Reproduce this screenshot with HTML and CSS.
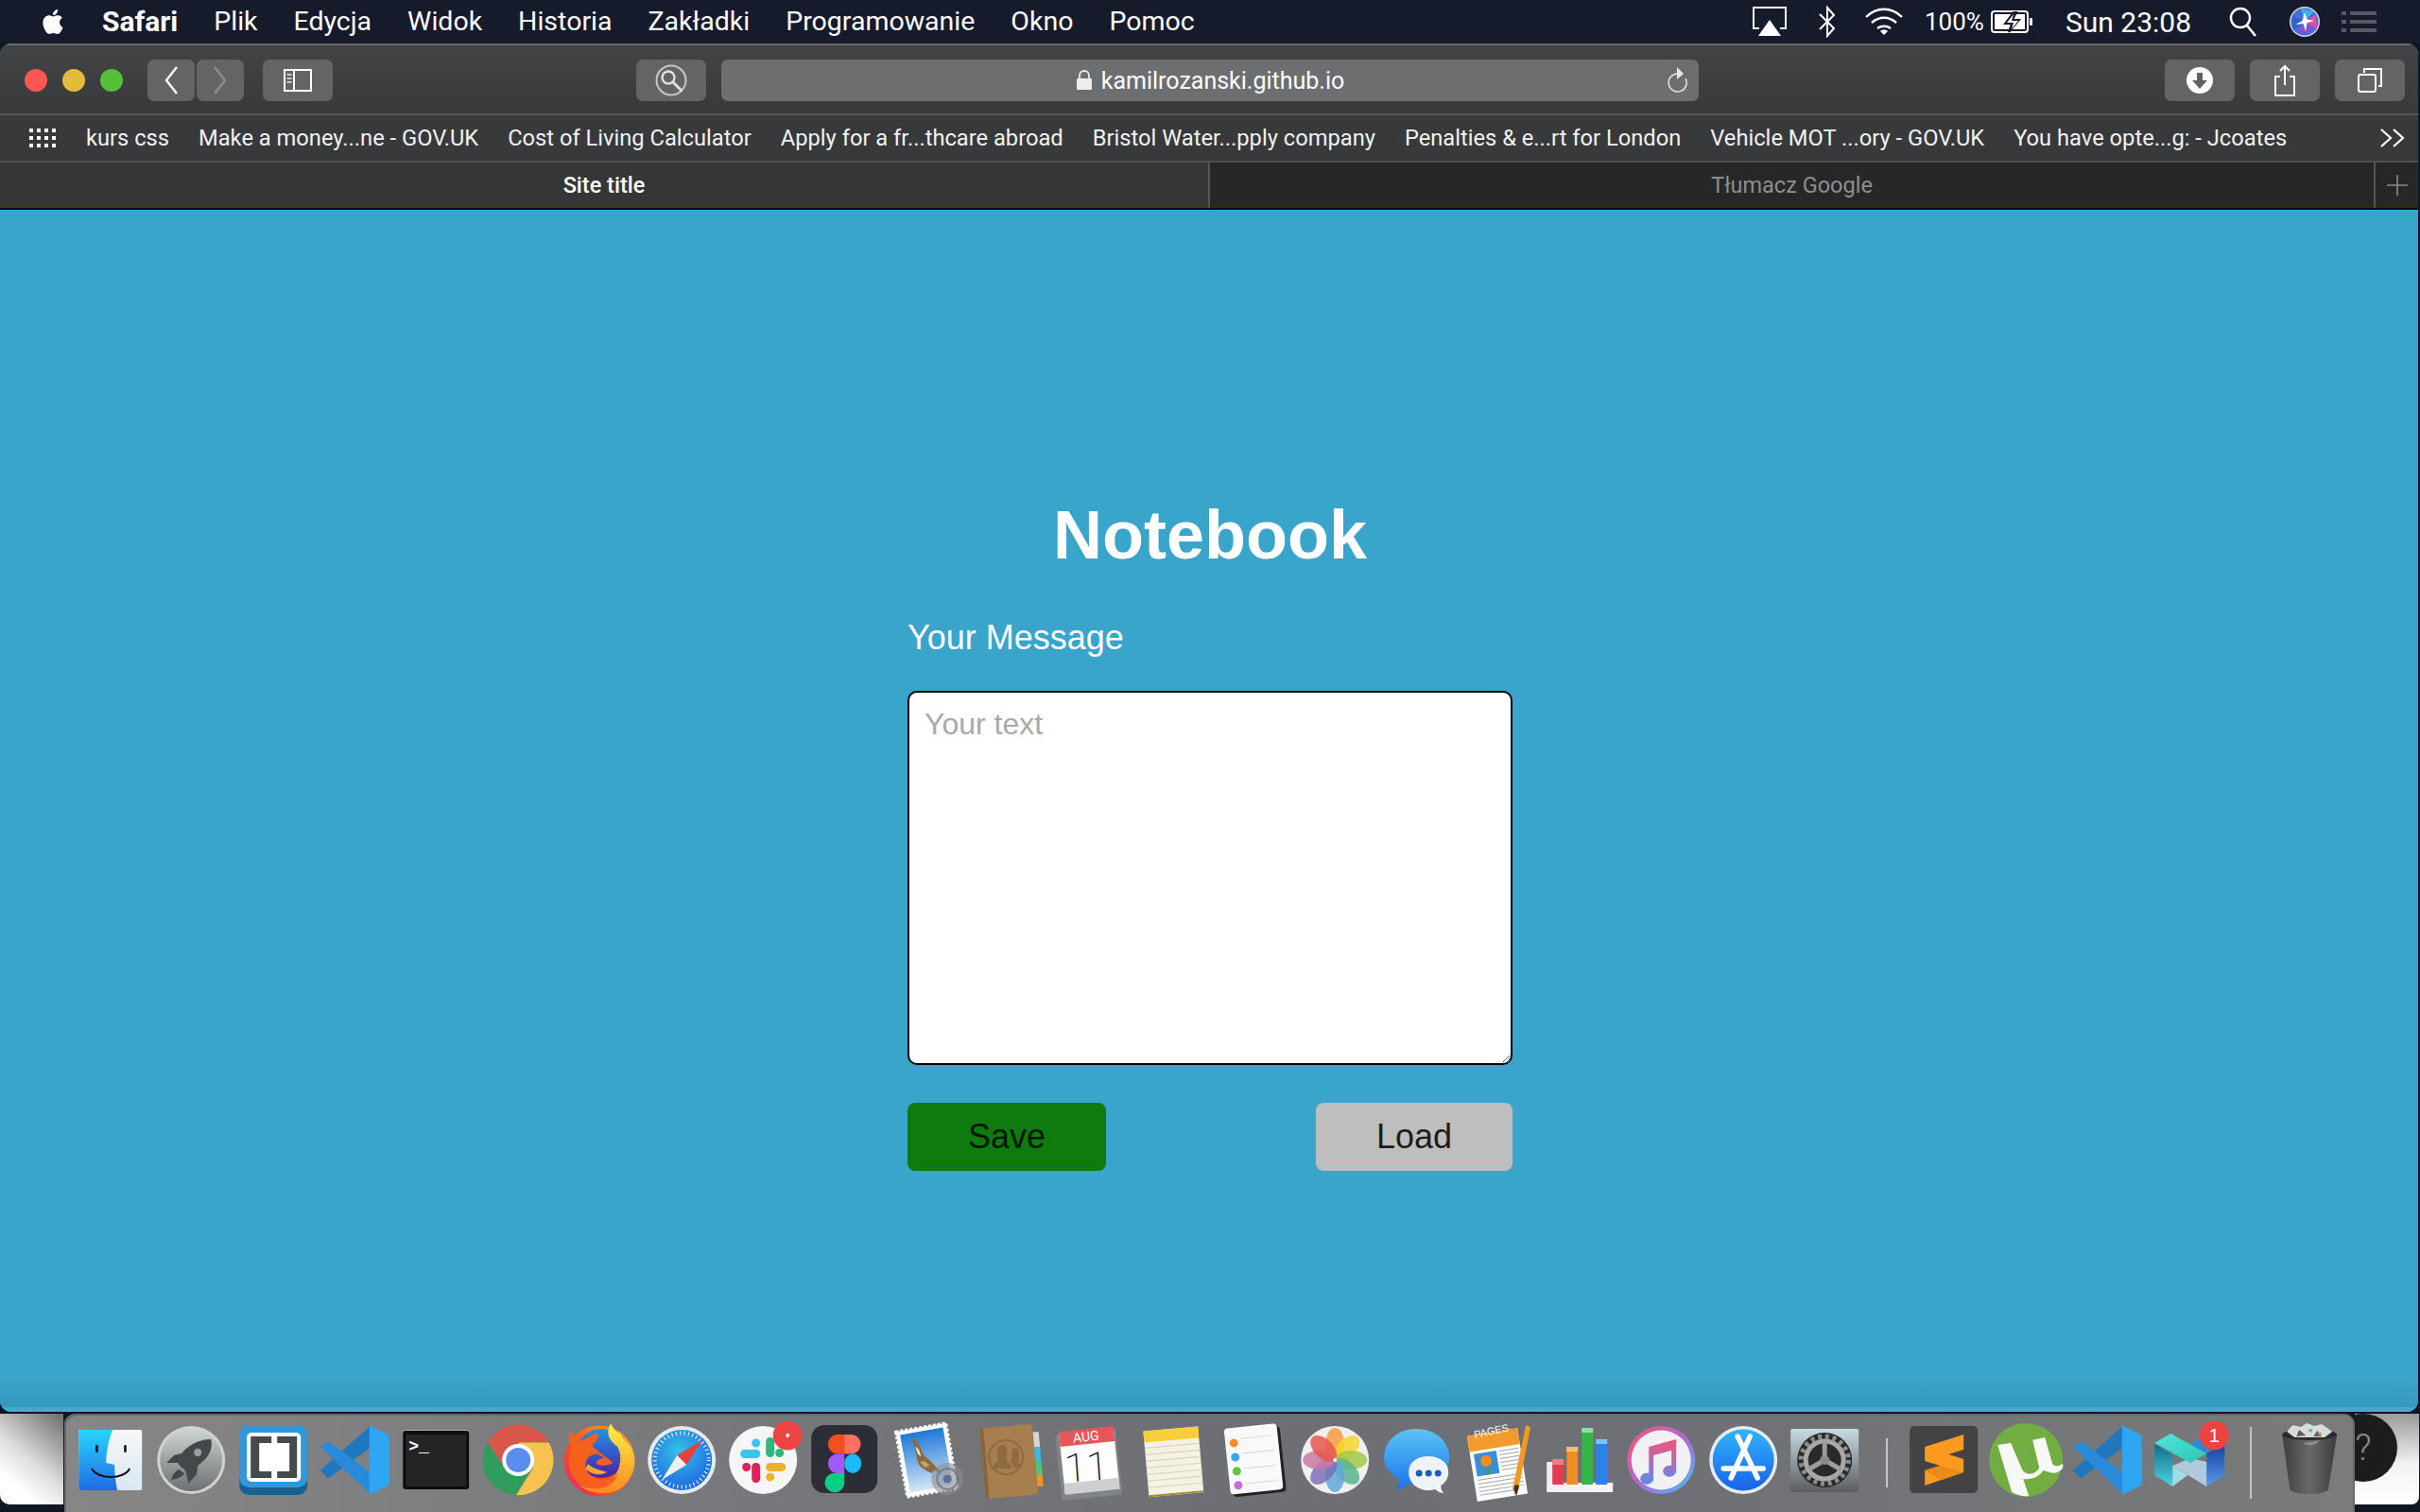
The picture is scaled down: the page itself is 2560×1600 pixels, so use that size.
FILE: index.html
```html
<!DOCTYPE html>
<html lang="pl">
<head>
<meta charset="utf-8">
<title>Site title</title>
<link rel="stylesheet" href="styles.css">
</head>
<body>
<header class="menubar">
  <svg class="apple" viewBox="0 0 24 24"><path fill="#fff" d="M12.152 6.896c-.948 0-2.415-1.078-3.96-1.04-2.04.027-3.91 1.183-4.961 3.014-2.117 3.675-.546 9.103 1.519 12.09 1.013 1.454 2.208 3.09 3.792 3.039 1.52-.065 2.09-.987 3.935-.987 1.831 0 2.35.987 3.96.948 1.637-.026 2.676-1.48 3.676-2.948 1.156-1.688 1.636-3.325 1.662-3.415-.039-.013-3.182-1.221-3.22-4.857-.026-3.04 2.48-4.494 2.597-4.559-1.429-2.09-3.623-2.324-4.39-2.376-2-.156-3.675 1.09-4.61 1.09zM15.53 3.83c.843-1.012 1.4-2.427 1.245-3.83-1.207.052-2.662.805-3.532 1.818-.78.896-1.454 2.338-1.273 3.714 1.338.104 2.715-.688 3.559-1.701"/></svg>
  <nav class="menus">
    <span class="app">Safari</span><span>Plik</span><span>Edycja</span><span>Widok</span><span>Historia</span><span>Zakładki</span><span>Programowanie</span><span>Okno</span><span>Pomoc</span>
  </nav>
  <div class="status">
    <svg class="st-air" viewBox="0 0 36 32"><path d="M7 23H1V1h34v22h-6" fill="none" stroke="#fff" stroke-width="2"/><path d="M18 14l12 17H6z" fill="#fff"/></svg>
    <svg class="st-bt" viewBox="0 0 20 34"><path d="M2 9l15 15-7 8V2l7 8L2 25" fill="none" stroke="#fff" stroke-width="2"/></svg>
    <svg class="st-wifi" viewBox="0 0 42 30"><g fill="none" stroke="#fff" stroke-width="2.4"><path d="M2 10c11-11 27-11 38 0"/><path d="M8 16c8-7 18-7 26 0"/><path d="M14 22c4-3 10-3 14 0"/></g><path d="M21 29l-4-4c2-2 6-2 8 0z" fill="#fff"/></svg>
    <span class="st-pct">100%</span>
    <svg class="st-bat" viewBox="0 0 46 26"><rect x="1" y="2" width="38" height="22" rx="3" fill="none" stroke="#fff" stroke-width="2"/><rect x="4" y="5" width="32" height="16" fill="#fff"/><path d="M24 3l-9 12h7l-3 9 11-13h-7l4-8z" fill="#161b2b" stroke="#161b2b" stroke-width="2"/><path d="M24 5l-7 9h7l-2 7 7-9h-7z" fill="#fff"/><rect x="41" y="9" width="3" height="8" rx="1" fill="#fff"/></svg>
    <span class="st-clock">Sun 23:08</span>
    <svg class="st-search" viewBox="0 0 30 32"><circle cx="12" cy="12" r="10" fill="none" stroke="#fff" stroke-width="2.4"/><path d="M19 20l9 11" stroke="#fff" stroke-width="2.6"/></svg>
    <svg class="st-siri" viewBox="-16 -16 32 32"><circle r="16" fill="#d6d6de"/><circle r="14.500" fill="#3f6fd8"/><path d="M0 0L-4-14 10-11z" fill="#38b0e8"/><path d="M0 0L12-8 13 8z" fill="#e04fa0"/><path d="M0 0L10 11-8 12z" fill="#8a4fd0"/><path d="M0 0L-12 9-13-6z" fill="#2f5fc8"/><path d="M0-10L2.500-2.500 10-1 2.500 1 1 10-1.500 2-10 3-2.500-1z" fill="#fff"/></svg>
    <svg class="st-list" viewBox="0 0 37 24"><g fill="#555a66"><rect y="1" width="5" height="4"/><rect y="10" width="5" height="4"/><rect y="19" width="5" height="4"/><rect x="9" y="1" width="28" height="4"/><rect x="9" y="10" width="28" height="4"/><rect x="9" y="19" width="28" height="4"/></g></svg>
  </div>
</header>

<main class="window">
  <div class="toolbar">
    <div class="lights"><i class="light red"></i><i class="light yellow"></i><i class="light green"></i></div>
    <div class="nav-pair">
      <button class="tbtn half"><svg class="i-chev" viewBox="0 0 16 32"><path d="M14 2L3 16l11 14" fill="none" stroke="#fff" stroke-width="2.4"/></svg></button>
      <button class="tbtn half"><svg class="i-chev" viewBox="0 0 16 32"><path d="M2 2l11 14L2 30" fill="none" stroke="#8b8c8e" stroke-width="2.4"/></svg></button>
    </div>
    <button class="tbtn wide sidebar"><svg class="i-side" viewBox="0 0 30 24"><rect x="1" y="1" width="28" height="22" fill="none" stroke="#fff" stroke-width="2"/><path d="M11 1v22" stroke="#fff" stroke-width="2"/><g fill="#c8c8c8"><rect x="3.5" y="5" width="5" height="2"/><rect x="3.5" y="9" width="5" height="2"/><rect x="3.5" y="13" width="5" height="2"/></g></svg></button>
    <button class="tbtn wide searchbtn"><svg class="i-mag" viewBox="0 0 34 34"><circle cx="17" cy="17" r="15.5" fill="none" stroke="#c8c8c8" stroke-width="2"/><circle cx="14" cy="14" r="6.5" fill="none" stroke="#e0e0e0" stroke-width="2.4"/><path d="M19 19l9 9" stroke="#e0e0e0" stroke-width="3"/></svg></button>
    <div class="address">
      <svg class="i-lock" viewBox="0 0 18 22"><path d="M4 10V6a5 5 0 0 1 10 0v4" fill="none" stroke="#eee" stroke-width="1.8"/><rect x="1" y="9" width="16" height="12" rx="1" fill="#eee"/></svg>
      <span class="url">kamilrozanski.github.io</span>
      <svg class="i-reload" viewBox="0 0 24 30"><path d="M20 14A9.500 9.500 0 1 1 11 9" fill="none" stroke="#e8e8e8" stroke-width="1.5"/><path d="M11 2l7 7-7 6z" fill="#e8e8e8"/></svg>
    </div>
    <div class="tool-right">
      <button class="tbtn wide"><svg class="i-down" viewBox="0 0 28 28"><circle cx="14" cy="14" r="14" fill="#fff"/><path d="M11 6h6v8h5l-8 9-8-9h5z" fill="#5f6062"/></svg></button>
      <button class="tbtn wide"><svg class="i-share" viewBox="0 0 24 34"><path d="M7 13H2v20h20V13h-5" fill="none" stroke="#fff" stroke-width="2"/><path d="M12 22V2M7 7l5-5 5 5" fill="none" stroke="#fff" stroke-width="2"/></svg></button>
      <button class="tbtn wide"><svg class="i-tabs" viewBox="0 0 26 26"><path d="M7 5V1h18v18h-3" fill="none" stroke="#fff" stroke-width="2"/><rect x="1" y="7" width="18" height="18" rx="2" fill="none" stroke="#fff" stroke-width="2"/></svg></button>
    </div>
  </div>

  <div class="bookmarks">
    <svg class="i-grid" viewBox="0 0 29 20"><g fill="#fff"><rect x="0" y="0" width="4" height="4"/><rect x="8" y="0" width="4" height="4"/><rect x="16" y="0" width="4" height="4"/><rect x="24" y="0" width="4" height="4"/><rect x="0" y="8" width="4" height="4"/><rect x="8" y="8" width="4" height="4"/><rect x="16" y="8" width="4" height="4"/><rect x="24" y="8" width="4" height="4"/><rect x="0" y="16" width="4" height="4"/><rect x="8" y="16" width="4" height="4"/><rect x="16" y="16" width="4" height="4"/><rect x="24" y="16" width="4" height="4"/></g></svg>
    <span>kurs css</span><span>Make a money...ne - GOV.UK</span><span>Cost of Living Calculator</span><span>Apply for a fr...thcare abroad</span><span>Bristol Water...pply company</span><span>Penalties &amp; e...rt for London</span><span>Vehicle MOT ...ory - GOV.UK</span><span>You have opte...g: - Jcoates</span>
    <svg class="i-more" viewBox="0 0 28 22"><path d="M2 2l10 9-10 9M15 2l10 9-10 9" fill="none" stroke="#fff" stroke-width="2.2"/></svg>
  </div>

  <div class="tabs">
    <div class="tab active">Site title</div>
    <div class="tab inactive">Tłumacz Google</div>
    <div class="tab plus"><svg class="i-plus" viewBox="0 0 22 22"><path d="M11 0v22M0 11h22" stroke="#8a8a8a" stroke-width="1.6"/></svg></div>
  </div>

  <section class="content">
    <div class="notebook">
      <h1>Notebook</h1>
      <label class="msg-label" for="msg">Your Message</label>
      <textarea id="msg" class="msg" placeholder="Your text"></textarea>
      <div class="actions">
        <button class="act save">Save</button>
        <button class="act load">Load</button>
      </div>
    </div>
  </section>
</main>

<footer class="dockrow">
  <div class="wall-left"></div>
  <div class="dock">
    <!-- Finder -->
    <svg class="ico" viewBox="-43 -44 86 88"><defs><linearGradient id="fa" x1="0" y1="0" x2="0" y2="1"><stop offset="0" stop-color="#2ad4fd"/><stop offset="1" stop-color="#1e6ce6"/></linearGradient><linearGradient id="fb" x1="0" y1="0" x2="0" y2="1"><stop offset="0" stop-color="#f6f7f8"/><stop offset="1" stop-color="#d9e8f3"/></linearGradient></defs><rect x="-33" y="-32" width="67" height="64" rx="2" fill="url(#fb)"/><path d="M-31-32H3C-1-22-4-9-4 3L5 5c0 9 1 19 3 27H-31a2 2 0 0 1-2-2V-30a2 2 0 0 1 2-2z" fill="url(#fa)"/><rect x="-15" y="-16" width="2.600" height="8" rx="1.300" fill="#111"/><rect x="15" y="-16" width="2.600" height="8" rx="1.300" fill="#111"/><path d="M-19 9c6 12 34 12 40 0" fill="none" stroke="#111" stroke-width="2"/></svg>
    <!-- Launchpad -->
    <svg class="ico" viewBox="-43 -44 86 88"><defs><linearGradient id="la" x1="0" y1="0" x2="0" y2="1"><stop offset="0" stop-color="#ced4d4"/><stop offset="1" stop-color="#6d7072"/></linearGradient></defs><circle r="36" fill="#d0d2d2"/><circle r="33" fill="url(#la)"/><path d="M21-22C8-22-4-15-10-7L-18-5-26 3-14 3C-13 6-10 8-8 9-7 11-5 13-5 15L-3 25 6 15 7 6C16 0 24-10 21-22z" fill="#45484a"/><circle cx="7" cy="-8" r="4" fill="#9a9d9e"/><path d="M-13 10C-18 12-20 17-21 21-15 20-9 18-7 14z" fill="#45484a"/></svg>
    <!-- Brackets -->
    <svg class="ico" viewBox="-43 -44 86 88"><rect x="-36" y="-26" width="72" height="63" rx="10" fill="#18608f"/><rect x="-36" y="-37" width="72" height="66" rx="10" fill="#3298d8"/><rect x="-28" y="-29" width="57" height="52" rx="5" fill="#fff"/><path d="M-2-25h-22v44H-2v-7h-13v-30H-2z" fill="#464a4c"/><path d="M4-25H25v44H4v-7H17v-30H4z" fill="#464a4c"/></svg>
    <!-- VS Code -->
    <svg class="ico" viewBox="-43 -44 86 88"><use href="#vsc"/></svg>
    <!-- Terminal -->
    <svg class="ico" viewBox="-43 -44 86 88"><rect x="-35" y="-32" width="70" height="63" rx="3" fill="#a9abad"/><rect x="-35" y="-31" width="70" height="62" rx="3" fill="#0d0d0d"/><rect x="-32" y="-27" width="64" height="55" fill="#242424"/><text class="term" x="-29" y="-9">&gt;_</text></svg>
    <!-- Chrome -->
    <svg class="ico" viewBox="-43 -44 86 88"><path d="M32.300-18.500A37 37 0 0 0-32.300-18.500L-16 6 0-18.500z" fill="#d9564a"/><path d="M-32.300-18.500A37 37 0 0 0-2 37L10 14-16 6z" fill="#2f9e5c"/><path d="M-2 37A37 37 0 0 0 32.300-18.500H0L16 8z" fill="#f6c34e"/><circle r="17" fill="#fff"/><circle r="13" fill="#5b8dee"/></svg>
    <!-- Firefox -->
    <svg class="ico" viewBox="-43 -44 86 88"><defs><linearGradient id="ffa" x1="0" y1="1" x2="1" y2="0"><stop offset="0" stop-color="#e9206a"/><stop offset=".45" stop-color="#f9551f"/><stop offset="1" stop-color="#ffb020"/></linearGradient><linearGradient id="ffb" x1="0" y1="0" x2="0" y2="1"><stop offset="0" stop-color="#fff04a"/><stop offset="1" stop-color="#f98a1f"/></linearGradient><linearGradient id="ffc" x1="0" y1="0" x2="0" y2="1"><stop offset="0" stop-color="#1f90e8"/><stop offset="1" stop-color="#4a22a0"/></linearGradient></defs><circle cx="0" cy="1" r="37.500" fill="url(#ffa)"/><circle cx="2" cy="-7" r="26" fill="url(#ffc)"/><path d="M12-39C5-26 12-20 19-14 25-4 22 12 12 22 2 31-12 32-22 26-12 36 12 40 26 27 38 15 40-2 33-14 29-20 24-21 22-29 20-27 14-33 12-39z" fill="url(#ffb)"/><path d="M-31-31C-33-24-33-19-29-14-36 2-32 18-20 26-6 34 14 32 20 14 12 26-8 22-14 10-16 4-14-4-6-6-3-7 4-4 4-2-1-1-5 2-3 4 1 7 10 6 14 3 10-2 4-4-8-15-3-20 3-29-4-28-15-24-21-17-24-21-28-25-31-31z" fill="#f5601e"/><path d="M-15 9C-10 14-2 18 8 13 0 10-8 9-12 4z" fill="#ffa53a"/></svg>
    <!-- Safari -->
    <svg class="ico" viewBox="-43 -44 86 88"><defs><radialGradient id="sa" cx=".45" cy=".35" r=".7"><stop offset="0" stop-color="#36c0ea"/><stop offset="1" stop-color="#1b62de"/></radialGradient></defs><circle r="36" fill="#e6ebef"/><circle r="32" fill="url(#sa)"/><circle r="28.500" fill="none" stroke="#d8ecff" stroke-width="4" stroke-dasharray="1.200 3.200"/><path d="M22-21L5 5-5-5z" fill="#e8403a"/><path d="M-21 21L5 5-5-5z" fill="#f0f0f0"/></svg>
    <!-- Slack -->
    <svg class="ico" viewBox="-43 -44 86 88"><circle r="36" fill="#f6f6f6"/><g fill="#37c5f0"><rect x="-24" y="-11" width="21" height="9" rx="4.5"/><circle cx="-7.5" cy="-18" r="4.5"/></g><g fill="#2eb67d"><rect x="3" y="-24" width="9" height="21" rx="4.5"/><circle cx="17.500" cy="-7.500" r="4.500"/></g><g fill="#ecb22e"><rect x="3" y="3" width="21" height="9" rx="4.5"/><circle cx="7.5" cy="18" r="4.5"/></g><g fill="#e01e5a"><rect x="-12" y="3" width="9" height="21" rx="4.5"/><circle cx="-17.500" cy="7.500" r="4.500"/></g><circle cx="26" cy="-26" r="15.500" fill="#ef4444"/><circle cx="26" cy="-26" r="2" fill="#fff"/></svg>
    <!-- Figma -->
    <svg class="ico" viewBox="-43 -44 86 88"><rect x="-35" y="-37" width="70" height="72" rx="14" fill="#2c2e35"/><path d="M0-27h-8a10.300 10.300 0 0 0 0 20.500H0z" fill="#f24e1e"/><path d="M0-27H8a10.300 10.300 0 0 1 0 20.500H0z" fill="#ff7262"/><path d="M0-6.500H-8a10.300 10.300 0 0 0 0 20.500H0z" fill="#a259ff"/><ellipse cx="9" cy="3.750" rx="9" ry="10.250" fill="#1abcfe"/><path d="M0 14H-8A10.300 10.300 0 1 0 0 24.300z" fill="#0acf83"/></svg>
    <!-- Mail -->
    <svg class="ico" viewBox="-43 -44 86 88"><defs><linearGradient id="ma" x1="0" y1="0" x2="0" y2="1"><stop offset="0" stop-color="#1f78d8"/><stop offset="1" stop-color="#d4e6f4"/></linearGradient></defs><g transform="rotate(-10)"><rect x="-27" y="-35" width="54" height="70" fill="#fff" stroke="#fff" stroke-width="3" stroke-dasharray="3 2"/><rect x="-23" y="-31" width="46" height="62" fill="url(#ma)"/></g><path d="M-16-25C-11-21-8-17-6-12-4-6-1-3 3 0L12 9 16 14 8 11 5 14C0 11-5 9-8 5-10 0-11-4-12-10-13-15-15-20-16-25z" fill="#8a6b40"/><path d="M-12-14C-9-13-7-9-6-4L-9-6z" fill="#f0e8d8"/><path d="M-7 2C-3 0 0 2 3 6L-2 8z" fill="#c8a468"/><circle cx="22" cy="20" r="17" fill="#8c8e94" opacity=".6"/><circle cx="22" cy="20" r="11" fill="none" stroke="#6a6c74" stroke-width="2" opacity=".7"/><circle cx="22" cy="20" r="4.500" fill="#5c7298"/></svg>
    <!-- Contacts -->
    <svg class="ico" viewBox="-43 -44 86 88"><g transform="rotate(-5)"><rect x="26" y="-27" width="9" height="16" fill="#d3d5d6"/><rect x="26" y="-11" width="9" height="15" fill="#3ab8e4"/><rect x="26" y="4" width="9" height="14" fill="#4ac87a"/><rect x="26" y="18" width="9" height="13" fill="#e89a22"/><rect x="-27" y="-36" width="56" height="75" rx="4" fill="#a77e4e"/><rect x="-27" y="-36" width="4" height="75" rx="2" fill="#8a643a"/></g><circle cx="-2" cy="-3" r="18" fill="none" stroke="#8e6a40" stroke-width="2"/><path d="M-10-14a6 8 0 0 1 8 0c2 8 1 12 0 15 4 2 6 5 6 8H-16c0-3 2-6 6-8-2-4-2-9 0-15z" fill="#8e6a40"/><path d="M5-11a5 7 0 0 1 6 0c2 7 0 11-1 13 3 1 5 4 5 6H7c-1-3-3-5-4-6 2-4 1-8 2-13z" fill="#8e6a40"/></svg>
    <!-- Calendar -->
    <svg class="ico" viewBox="-43 -44 86 88"><g transform="rotate(-6)"><rect x="-33" y="-30" width="64" height="70" rx="2" fill="#7f8488"/><rect x="-29" y="-31" width="58" height="64" fill="#fff"/><rect x="-29" y="22" width="58" height="12" fill="#cfcfcf"/><rect x="-29" y="-33" width="58" height="16" fill="#e9565a"/></g><text class="cal-m" x="-3" y="-20" transform="rotate(-6 -3 -20)">AUG</text><text class="cal-d" x="-2" y="22" transform="rotate(-4 -2 22)">11</text></svg>
    <!-- Notes -->
    <svg class="ico" viewBox="-43 -44 86 88"><g transform="rotate(-5)"><rect x="-27" y="-33" width="58" height="70" fill="#f5f2e2"/><rect x="-27" y="-33" width="58" height="12" fill="#f8cf3a"/><g stroke="#d8d4c2" stroke-width="1.200"><path d="M-27-15H31M-27-8H31M-27-1H31M-27 6H31M-27 13H31M-27 20H31M-27 27H31"/></g><rect x="-27" y="35" width="58" height="2" fill="#a88a3a"/></g></svg>
    <!-- Reminders -->
    <svg class="ico" viewBox="-43 -44 86 88"><g transform="rotate(-6)"><rect x="-24" y="-33" width="56" height="70" rx="4" fill="#222"/><rect x="-27" y="-36" width="56" height="70" rx="4" fill="#f9f9f9"/><g stroke="#d6d6d6" stroke-width="1"><path d="M-10-24H24M-10-8H24M-10 8H24M-10 24H24"/></g><circle cx="-18" cy="-20" r="4.500" fill="#f59220"/><circle cx="-18" cy="-5" r="4.500" fill="#35a6ef"/><circle cx="-18" cy="10" r="4.500" fill="#5ec83c"/><circle cx="-18" cy="25" r="4.500" fill="#c26fd8"/></g></svg>
    <!-- Photos -->
    <svg class="ico" viewBox="-43 -44 86 88"><circle r="36" fill="#f0f0f0"/><g><ellipse cy="-17" rx="10" ry="17" fill="#f7a04a" opacity=".9"/><ellipse cy="-17" rx="10" ry="17" fill="#f6d72f" opacity=".85" transform="rotate(45)"/><ellipse cy="-17" rx="10" ry="17" fill="#a2c946" opacity=".85" transform="rotate(90)"/><ellipse cy="-17" rx="10" ry="17" fill="#58b68e" opacity=".85" transform="rotate(135)"/><ellipse cy="-17" rx="10" ry="17" fill="#60a6dc" opacity=".85" transform="rotate(180)"/><ellipse cy="-17" rx="10" ry="17" fill="#7a72b8" opacity=".85" transform="rotate(225)"/><ellipse cy="-17" rx="10" ry="17" fill="#c77aa4" opacity=".85" transform="rotate(270)"/><ellipse cy="-17" rx="10" ry="17" fill="#e8574c" opacity=".85" transform="rotate(315)"/></g><circle r="2" fill="#fff"/></svg>
    <!-- Messages -->
    <svg class="ico" viewBox="-43 -44 86 88"><defs><linearGradient id="bubble" x1="0" y1="0" x2="0" y2="1"><stop offset="0" stop-color="#5cc4f8"/><stop offset="1" stop-color="#1a74e8"/></linearGradient></defs><path d="M0-33c20 0 35 13 35 31 0 17-15 29-33 29-4 0-8-1-11-2-3 3-8 6-13 6 2-3 4-7 4-11-9-5-16-13-16-22C-34-20-20-33 0-33z" fill="url(#bubble)"/><path d="M13-4c12 0 21 7 21 17 0 6-3 11-8 14 0 3 1 6 3 8-4 0-7-2-9-4-2 .500-5 1-7 1-12 0-21-8-21-19S1-4 13-4z" fill="#eef3f8"/><circle cx="3" cy="14" r="3.500" fill="#1d5fb8"/><circle cx="13" cy="14" r="3.500" fill="#1d5fb8"/><circle cx="23" cy="14" r="3.500" fill="#1d5fb8"/></svg>
    <!-- Pages -->
    <svg class="ico" viewBox="-43 -44 86 88"><g transform="rotate(-9)"><rect x="-28" y="-30" width="54" height="70" fill="#fbfbfb"/><rect x="-28" y="-30" width="54" height="17" fill="#f29a2e"/><rect x="-24" y="-10" width="24" height="24" fill="#3b8fd0"/><circle cx="-12" cy="-1" r="6" fill="#f28c1e"/><path d="M-12 5v9" stroke="#4a9c3a" stroke-width="2"/><g stroke="#a8a8a8" stroke-width="1"><path d="M3-9H24M3-5H24M3-1H24M3 3H24M3 7H24M3 11H24M-24 18H24M-24 22H24M-24 26H24M-24 30H24M-24 34H14"/></g></g><text class="pg" x="-24" y="-23" transform="rotate(-12 -24 -23)">PAGES</text><path d="M30-37l5 2-13 66-3 7-3-8z" fill="#f09a22"/><path d="M19 26l4 1-3 11-3-8z" fill="#333"/></svg>
    <!-- Numbers -->
    <svg class="ico" viewBox="-43 -44 86 88"><rect x="-35" y="24" width="70" height="10" fill="#f4f4f4"/><rect x="-35" y="2" width="9" height="22" fill="#eee"/><rect x="-29" y="0" width="12" height="26" fill="#e63a50"/><rect x="-29" y="-1" width="12" height="6" fill="#f07c88"/><rect x="-14" y="-14" width="12" height="40" fill="#f28c22"/><rect x="-14" y="-14" width="12" height="5" fill="#fbc06e"/><rect x="2" y="-34" width="12" height="60" fill="#34b648"/><rect x="2" y="-34" width="12" height="5" fill="#8fe0a0"/><rect x="17" y="-22" width="12" height="48" fill="#2a84e8"/><rect x="17" y="-22" width="12" height="5" fill="#7ac4f2"/></svg>
    <!-- iTunes -->
    <svg class="ico" viewBox="-43 -44 86 88"><defs><linearGradient id="ita" x1="0" y1="0" x2="1" y2="1"><stop offset="0" stop-color="#f45a6a"/><stop offset=".5" stop-color="#b464d8"/><stop offset="1" stop-color="#3cc4f0"/></linearGradient><linearGradient id="itb" x1="0" y1="0" x2="0" y2="1"><stop offset="0" stop-color="#f9527a"/><stop offset="1" stop-color="#5a8cf0"/></linearGradient></defs><circle r="36" fill="url(#ita)"/><circle r="31.500" fill="#f1f1f4"/><path d="M-13-14L16-22V12a7 6 0 1 1-5-6V-10L-8-5V20a7 6 0 1 1-5-6z" fill="url(#itb)"/></svg>
    <!-- App Store -->
    <svg class="ico" viewBox="-43 -44 86 88"><defs><linearGradient id="asa" x1="0" y1="0" x2="0" y2="1"><stop offset="0" stop-color="#2fb4fa"/><stop offset="1" stop-color="#1a62ea"/></linearGradient></defs><circle r="36" fill="#e9ecef"/><circle r="32.500" fill="url(#asa)"/><g stroke="#fff" stroke-width="5.500" stroke-linecap="round" fill="none"><path d="M-6-25L15 19"/><path d="M7-25L-13 19"/><path d="M-21 9H21"/></g></svg>
    <!-- System Preferences -->
    <svg class="ico" viewBox="-43 -44 86 88"><defs><linearGradient id="pra" x1="0" y1="0" x2="0" y2="1"><stop offset="0" stop-color="#c8dbe2"/><stop offset="1" stop-color="#5b5d5f"/></linearGradient></defs><rect x="-36" y="-33" width="72" height="67" rx="2" fill="url(#pra)"/><circle r="29" fill="#2a2a2c"/><circle r="25" fill="none" stroke="#8e8e8e" stroke-width="5" stroke-dasharray="4 3.850"/><circle r="20" fill="none" stroke="#a8a8a8" stroke-width="5"/><g stroke="#9c9c9c" stroke-width="5"><path d="M0 0V-20M0 0L17 10M0 0L-17 10"/></g><circle r="5" fill="#8a8a8a"/></svg>
    <i class="dock-sep first"></i>
    <!-- Sublime -->
    <svg class="ico" viewBox="-43 -44 86 88"><rect x="-36" y="-36" width="72" height="71" rx="5" fill="#434343"/><path d="M21-27V-11L5-6 21-1V13L-20 27V11L-4 6-20 1V-14z" fill="#fa9a20"/><path d="M-4 6L21 13-2 21-20 11z" fill="#e98a1a"/></svg>
    <!-- uTorrent -->
    <svg class="ico" viewBox="-43 -44 86 88"><ellipse rx="39" ry="39" fill="#72ad42"/><path d="M-30-16L-16-18-4 10C0 17 10 16 14 8L7-21 20-24 28 4C31 8 36 6 39 4V8C36 13 30 15 25 13L18 11C14 18 6 21-3 20L3 38C-2 39-10 37-15 34z" fill="#f8f8f4"/></svg>
    <!-- VS Code 2 -->
    <svg class="ico" viewBox="-43 -44 86 88"><defs><g id="vsc"><path d="M17-36V-14L-28 19-36 11z" fill="#1f77be" stroke="#1f77be" stroke-width="1" stroke-linejoin="round"/><path d="M-36-14L-27-19 17 14V36z" fill="#288ad9" stroke="#288ad9" stroke-width="1" stroke-linejoin="round"/><path d="M16-36L36-26V26L16 36z" fill="#2fa6f4" stroke="#2fa6f4" stroke-width="1" stroke-linejoin="round"/></g></defs><use href="#vsc"/></svg>
    <!-- Nimbus -->
    <svg class="ico" viewBox="-43 -44 86 88"><defs><linearGradient id="na" x1="0" y1="0" x2="0" y2="1"><stop offset="0" stop-color="#0f6f8c"/><stop offset="1" stop-color="#4ad4e0"/></linearGradient><linearGradient id="nb" x1="0" y1="0" x2="0" y2="1"><stop offset="0" stop-color="#103d9c"/><stop offset="1" stop-color="#5a9ae8"/></linearGradient><linearGradient id="nc" x1="0" y1="0" x2="1" y2="1"><stop offset="0" stop-color="#50e8dc"/><stop offset="1" stop-color="#2cc4b4"/></linearGradient></defs><path d="M1-17L9-22 22-12 18-7z" fill="#2a8ad8"/><path d="M-37-17L-18-6V28L-37 16z" fill="url(#na)"/><path d="M18-7L37-19V16L18 28z" fill="url(#nb)"/><path d="M-18 6L1-2 18 2V28z" fill="#b0c8dc"/><path d="M-18 6L-2 16-18 28z" fill="#a4dbe0"/><path d="M-37-18L-20-28 18-7 1 3z" fill="url(#nc)"/><circle cx="26" cy="-26" r="15.500" fill="#ec4242"/><text class="nb" x="26" y="-19">1</text></svg>
    <i class="dock-sep last"></i>
    <!-- Trash -->
    <svg class="ico" viewBox="-43 -44 86 88"><defs><linearGradient id="tra" x1="0" y1="0" x2="1" y2="0"><stop offset="0" stop-color="#3c3e40"/><stop offset=".5" stop-color="#66686a"/><stop offset="1" stop-color="#3a3c3e"/></linearGradient></defs><path d="M-28-27L-20 30C-19 38 20 38 21 30L30-27z" fill="url(#tra)"/><ellipse cx="1" cy="-27" rx="29" ry="6" fill="#2a2b2c"/><path d="M-23-30L-17-37-8-35-2-39 6-36 14-38 25-30 17-24H-15z" fill="#d8dadc"/><path d="M-10-32L-3-26-13-25zM9-31L14-25H5z" fill="#5a5e62"/><path d="M-1-32L4-33 3-29z" fill="#4ab878"/><path d="M8-28L13-29 13-25z" fill="#d8702a"/><path d="M-6-18C0-19 8-20 12-21 8-15 0-14-6-18z" fill="#8a8c8e"/></svg>
  </div>
  <div class="wall-right"><div class="helpcircle">?</div></div>
</footer>
</body>
</html>
```

FILE: styles.css
```css
* { box-sizing: border-box; }
html, body { margin: 0; padding: 0; }
body {
  width: 2560px;
  height: 1600px;
  overflow: hidden;
  display: flex;
  flex-direction: column;
  background: #101624;
  font-family: Roboto, "Liberation Sans", sans-serif;
}

/* macOS menu bar */
.menubar {
  height: 46px;
  flex: none;
  display: flex;
  align-items: center;
  background: #161b2b;
  color: #fff;
  font-size: 28.500px;
  padding-left: 43px;
}
.apple { width: 26px; height: 32px; flex: none; margin-right: 39px; }
.menus { display: flex; gap: 38px; }
.app { font-weight: 700; font-size: 30px; line-height: 34px; }
.status { margin-left: auto; display: flex; align-items: center; font-size: 26px; }
.st-air { width: 36px; height: 32px; margin-right: 33px; }
.st-bt { width: 20px; height: 34px; margin-right: 29px; }
.st-wifi { width: 42px; height: 30px; margin-right: 22px; }
.st-pct { width: 60px; margin-right: 10px; }
.st-bat { width: 46px; height: 26px; margin-right: 33px; }
.st-clock { width: 133px; font-size: 30px; margin-right: 40px; white-space: nowrap; }
.st-search { width: 30px; height: 32px; margin-right: 34px; }
.st-siri { width: 32px; height: 32px; margin-right: 23px; }
.st-list { width: 37px; height: 24px; margin-right: 46px; }

/* Safari window */
.window {
  height: 1448px;
  flex: none;
  margin-right: 2px;
  display: flex;
  flex-direction: column;
  border-radius: 12px;
  overflow: hidden;
  background: #39a5ca;
}
.toolbar {
  height: 76px;
  flex: none;
  display: flex;
  align-items: center;
  padding: 14px 14px 12px 26px;
  background: linear-gradient(#434446, #38393b);
  border-top: 2px solid #6a6b6d;
  border-bottom: 2px solid #555658;
}
.lights { display: flex; gap: 16px; margin-right: 26px; }
.light { width: 24px; height: 24px; border-radius: 50%; display: block; }
.light.red { background: #fc5753; }
.light.yellow { background: #e3bc3c; }
.light.green { background: #54c038; }
.nav-pair { display: flex; gap: 2px; margin-right: 20px; }
.tbtn {
  height: 44px;
  padding: 0;
  border: 0;
  border-radius: 7px;
  background: #636466;
  display: flex;
  align-items: center;
  justify-content: center;
}
.tbtn.half { width: 50px; }
.tbtn.wide { width: 74px; }
.sidebar { margin-right: 321px; }
.searchbtn { margin-right: 16px; }
.i-chev { width: 16px; height: 32px; }
.i-side { width: 30px; height: 24px; }
.i-mag { width: 34px; height: 34px; }
.address {
  width: 1034px;
  height: 44px;
  border-radius: 7px;
  background: #6d6e70;
  color: #fff;
  font-size: 25px;
  display: flex;
  align-items: center;
  justify-content: center;
  gap: 9px;
  position: relative;
}
.i-lock { width: 18px; height: 22px; }
.i-reload { position: absolute; right: 10px; top: 6px; width: 24px; height: 30px; }
.tool-right { margin-left: auto; display: flex; gap: 16px; }
.i-down { width: 28px; height: 28px; }
.i-share { width: 24px; height: 34px; }
.i-tabs { width: 26px; height: 26px; }

.bookmarks {
  height: 50px;
  flex: none;
  display: flex;
  align-items: center;
  gap: 31px;
  padding: 0 13px 0 31px;
  background: #38393b;
  border-bottom: 2px solid #4e4f51;
  color: #f2f2f2;
  font-size: 23.700px;
  white-space: nowrap;
}
.i-grid { width: 29px; height: 20px; flex: none; }
.i-more { width: 28px; height: 22px; flex: none; margin-left: auto; }

.tabs {
  height: 50px;
  flex: none;
  display: flex;
  background: #262729;
  border-bottom: 2px solid #0c0c0c;
  font-size: 23.500px;
}
.tab { display: flex; align-items: center; justify-content: center; }
.tab.active { width: 1280px; background: #353638; color: #fff; font-weight: 500; border-right: 2px solid #555; }
.tab.inactive { flex: 1; color: #8e8e8e; border-right: 2px solid #555; }
.tab.plus { width: 45px; }
.i-plus { width: 22px; height: 22px; }

/* page content */
.content {
  flex: 1;
  display: flex;
  justify-content: center;
  padding-left: 2px;
  background: linear-gradient(#39a5ca 97%, #3699bd 99.600%, #45aacb 99.600%);
  font-family: "Liberation Sans", Arial, sans-serif;
}
.notebook { width: 640px; padding-top: 304px; }
h1 {
  margin: 0 0 49px;
  font-size: 72px;
  line-height: 80px;
  font-weight: 700;
  text-align: center;
  color: #fff;
}
.msg-label { display: block; font-size: 36px; line-height: 40px; color: #fff; margin-bottom: 36px; }
.msg {
  display: block;
  width: 640px;
  height: 396px;
  padding: 15px 16px;
  border: 2px solid #000;
  border-radius: 10px;
  background: #fff;
  font-family: "Liberation Sans", Arial, sans-serif;
  font-size: 32px;
  outline: 0;
}
.msg::placeholder { color: #a9a9a9; opacity: 1; }
.actions { display: flex; justify-content: space-between; margin-top: 40px; }
.act {
  height: 72px;
  border: 0;
  border-radius: 8px;
  font-family: "Liberation Sans", Arial, sans-serif;
  font-size: 36px;
  padding: 0;
}
.act.save { width: 210px; background: #0f7b0f; color: #021802; }
.act.load { width: 208px; background: #bebebe; color: #1c1c1c; }

/* dock */
.dockrow { flex: 1; display: flex; margin-top: 2px; min-height: 0; }
.wall-left {
  width: 67px;
  margin: 0 1px 0 0;
  height: 96px;
  border-radius: 0 0 0 10px;
  background: linear-gradient(40deg, #fff 22%, #dedede 48%, #6c6c6c 100%);
}
.dock {
  width: 2423px;
  padding: 5px 0 0 4.800px;
  display: flex;
  align-items: flex-start;
  border-radius: 12px 12px 0 0;
  box-shadow: inset 2px 2px 0 #6a6a6a, inset -2px 0 0 #6a6a6a;
  background: linear-gradient(90deg, #868686, #6d6f74 50%, #6e7075 70%, #7b7b7b);
}
.ico { width: 86.400px; height: 88px; flex: none; overflow: visible; }
.dock-sep { display: block; width: 2px; flex: none; background: #c4c4c4; }
.dock-sep.first { height: 52px; margin: 21px 16px 0 22px; }
.dock-sep.last { height: 76px; margin: 9px 17px 0 21px; }
.wall-right {
  flex: 1;
  height: 96px;
  margin-right: 1px;
  position: relative;
  overflow: hidden;
  border-radius: 0 0 8px 0;
  background: linear-gradient(#9a9a9a, #f2f2f2 55%, #fff);
}
.helpcircle {
  position: absolute;
  left: -27px;
  top: 0;
  width: 72px;
  height: 72px;
  border-radius: 50%;
  background: #1c1c1c;
  color: #8a8a8a;
  font-family: Roboto, "Liberation Sans", sans-serif;
  font-weight: 300;
  font-size: 38px;
  line-height: 72px;
  text-align: center;
}

/* svg text */
.term { font-family: "Liberation Mono", monospace; font-size: 18px; font-weight: 700; fill: #fff; }
.cal-m { font-family: Roboto, sans-serif; font-size: 14px; fill: #fff; text-anchor: middle; }
.cal-d { font-family: Roboto, sans-serif; font-weight: 200; font-size: 42px; fill: #222; text-anchor: middle; }
.pg { font-family: "Liberation Sans", sans-serif; font-size: 11px; fill: #fff; }
.nb { font-family: "Liberation Sans", sans-serif; font-size: 20px; fill: #fff; text-anchor: middle; }
```
